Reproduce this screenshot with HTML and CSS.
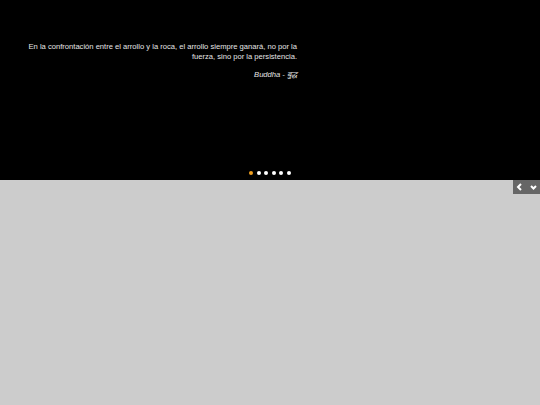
FILE: index.html
```html
<!DOCTYPE html>
<html>
<head>
<meta charset="utf-8">
<link rel="stylesheet" href="styles.css">
</head>
<body>
<div class="slider">
  <div class="quote">
    <p class="text">En la confrontación entre el arrollo y la roca, el arrollo siempre ganará, no por la fuerza, sino por la persistencia.</p>
    <p class="author">Buddha - बुद्ध</p>
  </div>
  <div class="dots">
    <span class="dot active"></span>
    <span class="dot"></span>
    <span class="dot"></span>
    <span class="dot"></span>
    <span class="dot"></span>
    <span class="dot"></span>
  </div>
</div>
<div class="bar">
  <div class="controls">
    <svg width="14" height="14" viewBox="0 0 14 14"><path d="M8 4 L5 7 L8 10" fill="none" stroke="#fff" stroke-width="2"/></svg>
    <svg width="13" height="14" viewBox="0 0 13 14"><path d="M4 6 L6.5 8.5 L9 6" fill="none" stroke="#fff" stroke-width="2"/></svg>
  </div>
</div>
</body>
</html>
```
FILE: styles.css
```css
html, body { margin: 0; padding: 0; }
body { background: #cccccc; font-family: "Liberation Sans", Arial, sans-serif; }
.slider {
  background: #000;
  height: 180px;
  display: flex;
  flex-direction: column;
  justify-content: space-between;
  align-items: center;
}
.quote {
  align-self: flex-start;
  width: 270px;
  margin-left: 27px;
  padding-top: 42px;
  text-align: right;
  color: #e6e6e6;
  font-size: 7.6px;
  line-height: 9.5px;
}
.quote p { margin: 0; }
.author { font-style: italic; margin-top: 9px !important; }
.dots {
  display: flex;
  gap: 3.5px;
  margin-bottom: 5px;
}
.dot { width: 4px; height: 4px; border-radius: 50%; background: #fff; }
.dot.active { background: #f0a020; }
.bar { display: flex; justify-content: flex-end; }
.controls {
  background: #666666;
  width: 27px;
  height: 14px;
  display: flex;
  align-items: center;
}
.controls svg { display: block; }
```
